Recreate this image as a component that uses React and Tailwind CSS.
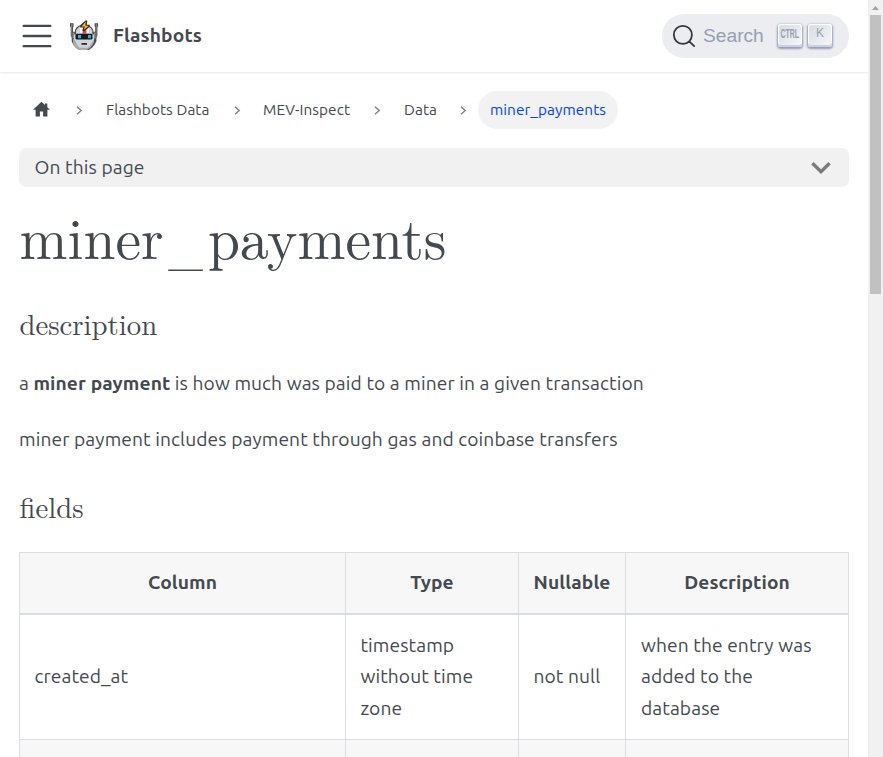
import React from "react";

function RobotLogo() {
  return (
    <svg className="mt-px block h-[34px] w-8 shrink-0" viewBox="0 0 32 34" aria-hidden="true">
      <path fill="#4a4c4e" d="M2 4.300h3.600v3.400h-.6v5H7V11l1.500-2.500L11 6.600h10l2.700 1.900 1.600 2.500v1.700h1.900v-5h-.6V4.300h3.500v3.400h-.7v9l-1 2v3.500l-1.800 3.600-2.600 3-3.200 2.200H11.200l-3.300-2.200-2.600-3-1.600-3.600v-3.500l-1-2v-9H2z" />
      <path fill="#8b8d8f" d="M3 5.300h1.600v1.900H4v11l-.5-1zM27.800 5.300h1.300v1.900h-.5v10l-.6 1zM4.500 13.500h2v6h-2zM25.700 13.500h1.900v6h-1.900z" />
      <path fill="#d3d4d5" d="M8 11.500 9.800 9l1.900-1.400h8.800L22.700 9l1.600 2.500v4H26v6.700l-1.700 3.100-2.200 2.700-2.600 1.900h-6.800l-3-1.900-2.100-2.700L6 22.200v-6.700h2z" />
      <path fill="#a9aaac" d="m5 20 2 1 2.500 5.500 2.200 2.300h8l2.300-2.300 3-5 1-.5v2l-1.700 3.200-2.400 2.700-3.100 2h-7.900l-3.100-2-2.400-2.700L5 22z" />
      <path fill="#f4f4f4" d="M12 8h3v6h-3zM18.500 8h2.500v6h-2.500z" />
      <path fill="#e5442f" d="M14.600 10h3.700v4.500h-3.700z" />
      <path fill="#17191c" d="M8.500 14.700h15l1 1v3.700l-1 1h-15l-1-1v-3.700z" />
      <path fill="#1eb5ea" d="M10 16h3v3.200h-3zM20 16h3v3.200h-3z" />
      <path fill="#2d2f31" d="M13.500 24h5.500v1.800h-5.500z" />
      <path fill="#3a2c1c" d="M17.600 1.500h1.700l-.5 4.200h3v2l-5.600 4.600-1.700-.6.700-3.300h-3V6.300z" />
      <path fill="#fbb32c" d="m17.800 2.600-.5 4.200h3.500l-4.700 4 .6-3.400h-3.200z" />
    </svg>
  );
}

function Key({ children }) {
  return (
    <span className="flex h-[23px] w-6 items-center justify-center rounded-[3px] bg-linear-to-br from-[#d5dbe4] to-[#f8f8f8] pb-[2px] text-[#969faf] shadow-[inset_0_-2px_0_0_#cdcde6,inset_0_0_1px_1px_#fff,0_1px_2px_1px_rgba(30,35,90,0.4)]">
      {children}
    </span>
  );
}

function Header() {
  return (
    <header className="flex h-[72px] shrink-0 items-center bg-white pr-[19px] pl-[19px] shadow-[0_1px_2px_0_rgba(0,0,0,0.1)]">
      <svg className="mb-px -ml-px block h-[38px] w-[38px]" viewBox="0 0 30 30" fill="none" stroke="#444950" strokeWidth="1.9" strokeLinecap="round">
        <path d="M4.500 7h21M4.500 15h21M4.500 23h21" />
      </svg>
      <div className="mb-[2px] ml-3 flex items-center">
        <RobotLogo />
        <span className="ml-[13px] text-[19.2px] leading-6 font-bold tracking-[0.12px]">Flashbots</span>
      </div>
      <button className="ml-auto flex h-11 w-[187px] items-center rounded-full bg-[#ebedf0] pl-[10px] text-left">
        <svg className="block h-6 w-6" viewBox="0 0 20 20" fill="none" stroke="#33373d" strokeWidth="1.5" strokeLinecap="round" strokeLinejoin="round">
          <path d="M14.386 14.386l4.088 4.088-4.088-4.088c-2.942 2.941-7.711 2.941-10.653 0-2.941-2.942-2.941-7.711 0-10.653 2.942-2.941 7.711-2.941 10.653 0 2.941 2.942 2.941 7.711 0 10.653z" />
        </svg>
        <span className="ml-[7px] w-[75px] font-['Liberation_Sans',sans-serif] text-[19.2px] leading-6 text-[#969faf]">Search</span>
        <span className="mb-[2px] flex gap-[6px]">
          <Key>
            <span className="inline-block scale-x-[0.63] scale-y-110 font-['Liberation_Sans',sans-serif] text-[11px] leading-none font-bold">CTRL</span>
          </Key>
          <Key>
            <span className="mb-[3px] font-['Liberation_Sans',sans-serif] text-[12px] leading-none">K</span>
          </Key>
        </span>
      </button>
    </header>
  );
}

function Separator({ className }) {
  return (
    <svg className={"block h-[9px] w-[7px] shrink-0 " + className} viewBox="0 0 7 9" fill="none" stroke="#808387" strokeWidth="1.5">
      <path d="M1 .7 5.2 4.5 1 8.3" />
    </svg>
  );
}

function Breadcrumbs() {
  return (
    <nav className="flex h-[38px] items-center text-[15.36px] leading-6 tracking-[0.08px]">
      <svg className="mb-[2px] ml-[14px] block h-[17px] w-[17px]" viewBox="0 0 17 17" fill="#444950">
        <path d="M8.500.8 0 8.800h2.600V15.500h4.300v-5h3.200v5h4.300V8.800H17l-2.700-2.600V2.500h-2.400v1.500z" />
      </svg>
      <Separator className="ml-[26px]" />
      <span className="ml-[23px] w-[104px] whitespace-nowrap">Flashbots Data</span>
      <Separator className="ml-[24px]" />
      <span className="ml-[22px] w-[88px] whitespace-nowrap">MEV-Inspect</span>
      <Separator className="ml-[23px]" />
      <span className="ml-[23px] w-[33px] whitespace-nowrap">Data</span>
      <Separator className="ml-[23px]" />
      <span className="ml-[11px] flex h-[38px] w-[140px] items-center justify-center rounded-full bg-[#f2f2f2] whitespace-nowrap text-[#0040ff]">
        miner_payments
      </span>
    </nav>
  );
}

function FieldsTable() {
  return (
    <table className="mt-[26px] w-[830px] table-fixed border-collapse text-[19.2px] leading-[31.68px] tracking-[0.1px]">
      <colgroup>
        <col className="w-[326px]" />
        <col className="w-[173px]" />
        <col className="w-[107px]" />
        <col className="w-[223px]" />
      </colgroup>
      <thead>
        <tr className="h-[61px] border-b-2 border-[#dadde1] bg-[#f7f7f7]">
          <th className="border border-b-2 border-[#dadde1] p-0">Column</th>
          <th className="border border-b-2 border-[#dadde1] p-0">Type</th>
          <th className="border border-b-2 border-[#dadde1] p-0">Nullable</th>
          <th className="border border-b-2 border-[#dadde1] p-0">Description</th>
        </tr>
      </thead>
      <tbody>
        <tr className="h-[126px]">
          <td className="border border-[#dadde1] px-[14.4px] pt-px pb-0">created_at</td>
          <td className="border border-[#dadde1] px-[14.4px] pt-px pb-0">timestamp<br />without time<br />zone</td>
          <td className="border border-[#dadde1] px-[14.4px] pt-px pb-0 whitespace-nowrap">not null</td>
          <td className="border border-[#dadde1] px-[15px] pt-px pb-0 whitespace-nowrap">when the entry was<br />added to the<br />database</td>
        </tr>
        <tr className="h-[62px] bg-[#f7f7f7]">
          <td className="border border-[#dadde1]" />
          <td className="border border-[#dadde1]" />
          <td className="border border-[#dadde1]" />
          <td className="border border-[#dadde1]" />
        </tr>
      </tbody>
    </table>
  );
}

export default function App() {
  return (
    <div className="flex h-[757px] w-[883px] overflow-hidden bg-white font-['Ubuntu','Noto_Sans',sans-serif] text-[#444950]">
      <div className="flex min-w-0 flex-1 flex-col">
        <Header />
        <main className="px-[19px] pt-[19px]">
          <Breadcrumbs />
          <button className="mt-[19px] flex h-[39px] w-full items-center justify-between rounded-[7px] bg-[#f1f1f1] pr-[18px] pl-[15.5px] text-[19.2px] tracking-[0.1px]">
            <span>On this page</span>
            <svg className="mb-px block h-5 w-5" viewBox="0 0 20 20" fill="none" stroke="#7a7a7a" strokeWidth="3.4">
              <path d="M1.4 6.2 10 14.6 18.6 6.2" />
            </svg>
          </button>
          <h1 className="mt-[13px] h-[71px] pl-[0.5px] font-['Latin_Modern_Roman','Liberation_Serif',serif] text-[57.6px] leading-[71px]">
            miner<span className="mr-px inline-block origin-center translate-y-[4px] scale-x-[0.8]">_</span>payments
          </h1>
          <h2 className="mt-8 h-10 pl-[0.4px] font-['Latin_Modern_Roman','Liberation_Serif',serif] text-[28.8px] leading-10">description</h2>
          <p className="mt-[25px] text-[19.2px] leading-[31px] tracking-[0.1px] whitespace-nowrap">
            a <strong className="font-bold">miner payment</strong> is how much was paid to a miner in a given transaction
          </p>
          <p className="mt-[25px] text-[19.2px] leading-[31px] tracking-[0.1px] whitespace-nowrap">miner payment includes payment through gas and coinbase transfers</p>
          <h2 className="mt-[31px] h-10 pl-[0.4px] font-['Latin_Modern_Roman','Liberation_Serif',serif] text-[28.8px] leading-10">fields</h2>
          <FieldsTable />
        </main>
      </div>
      <div className="flex w-[15px] shrink-0 flex-col items-center bg-[#f1f1f1]">
        <svg className="block h-[15px] w-[15px] shrink-0" viewBox="0 0 15 15" fill="#a3a3a3">
          <path d="M4 10h7L7.500 6z" />
        </svg>
        <div className="h-[279px] w-[11px] bg-[#c1c1c1]" />
      </div>
    </div>
  );
}
